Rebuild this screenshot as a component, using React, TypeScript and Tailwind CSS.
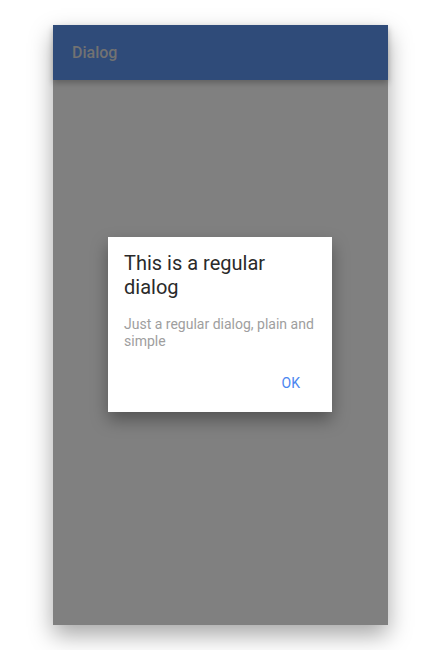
import React from "react";

const App = () => {
  return (
    <div className="w-[440px] h-[650px] bg-white pt-[25px] pl-[53px]" style={{ fontFamily: "Roboto, 'Liberation Sans', sans-serif" }}>
      <div className="relative w-[335px] h-[600px] bg-[#808080] shadow-[0_10px_22px_rgba(0,0,0,0.35)] flex flex-col">
        <header className="h-[55px] bg-[#2f4b79] flex items-center px-[19px] shadow-[0_3px_6px_rgba(0,0,0,0.25)]">
          <span className="text-[16px] font-medium text-[#727272]">Dialog</span>
        </header>
        <div className="flex-1 flex pl-[55px] pt-[157px]">
          <div className="w-[224px] h-[175px] bg-white shadow-[0_8px_16px_rgba(0,0,0,0.35)] px-4 pt-[14px] flex flex-col">
            <h2 className="text-[20px] leading-[24px] text-[#2a2a2a]">This is a regular dialog</h2>
            <p className="mt-[17px] text-[14px] leading-[17px] text-[#9e9e9e]">Just a regular dialog, plain and simple</p>
            <div className="flex justify-end mt-[23px] pr-[16px]">
              <button className="text-[14px] text-[#4a86f0]">OK</button>
            </div>
          </div>
        </div>
      </div>
    </div>
  );
};

export default App;
